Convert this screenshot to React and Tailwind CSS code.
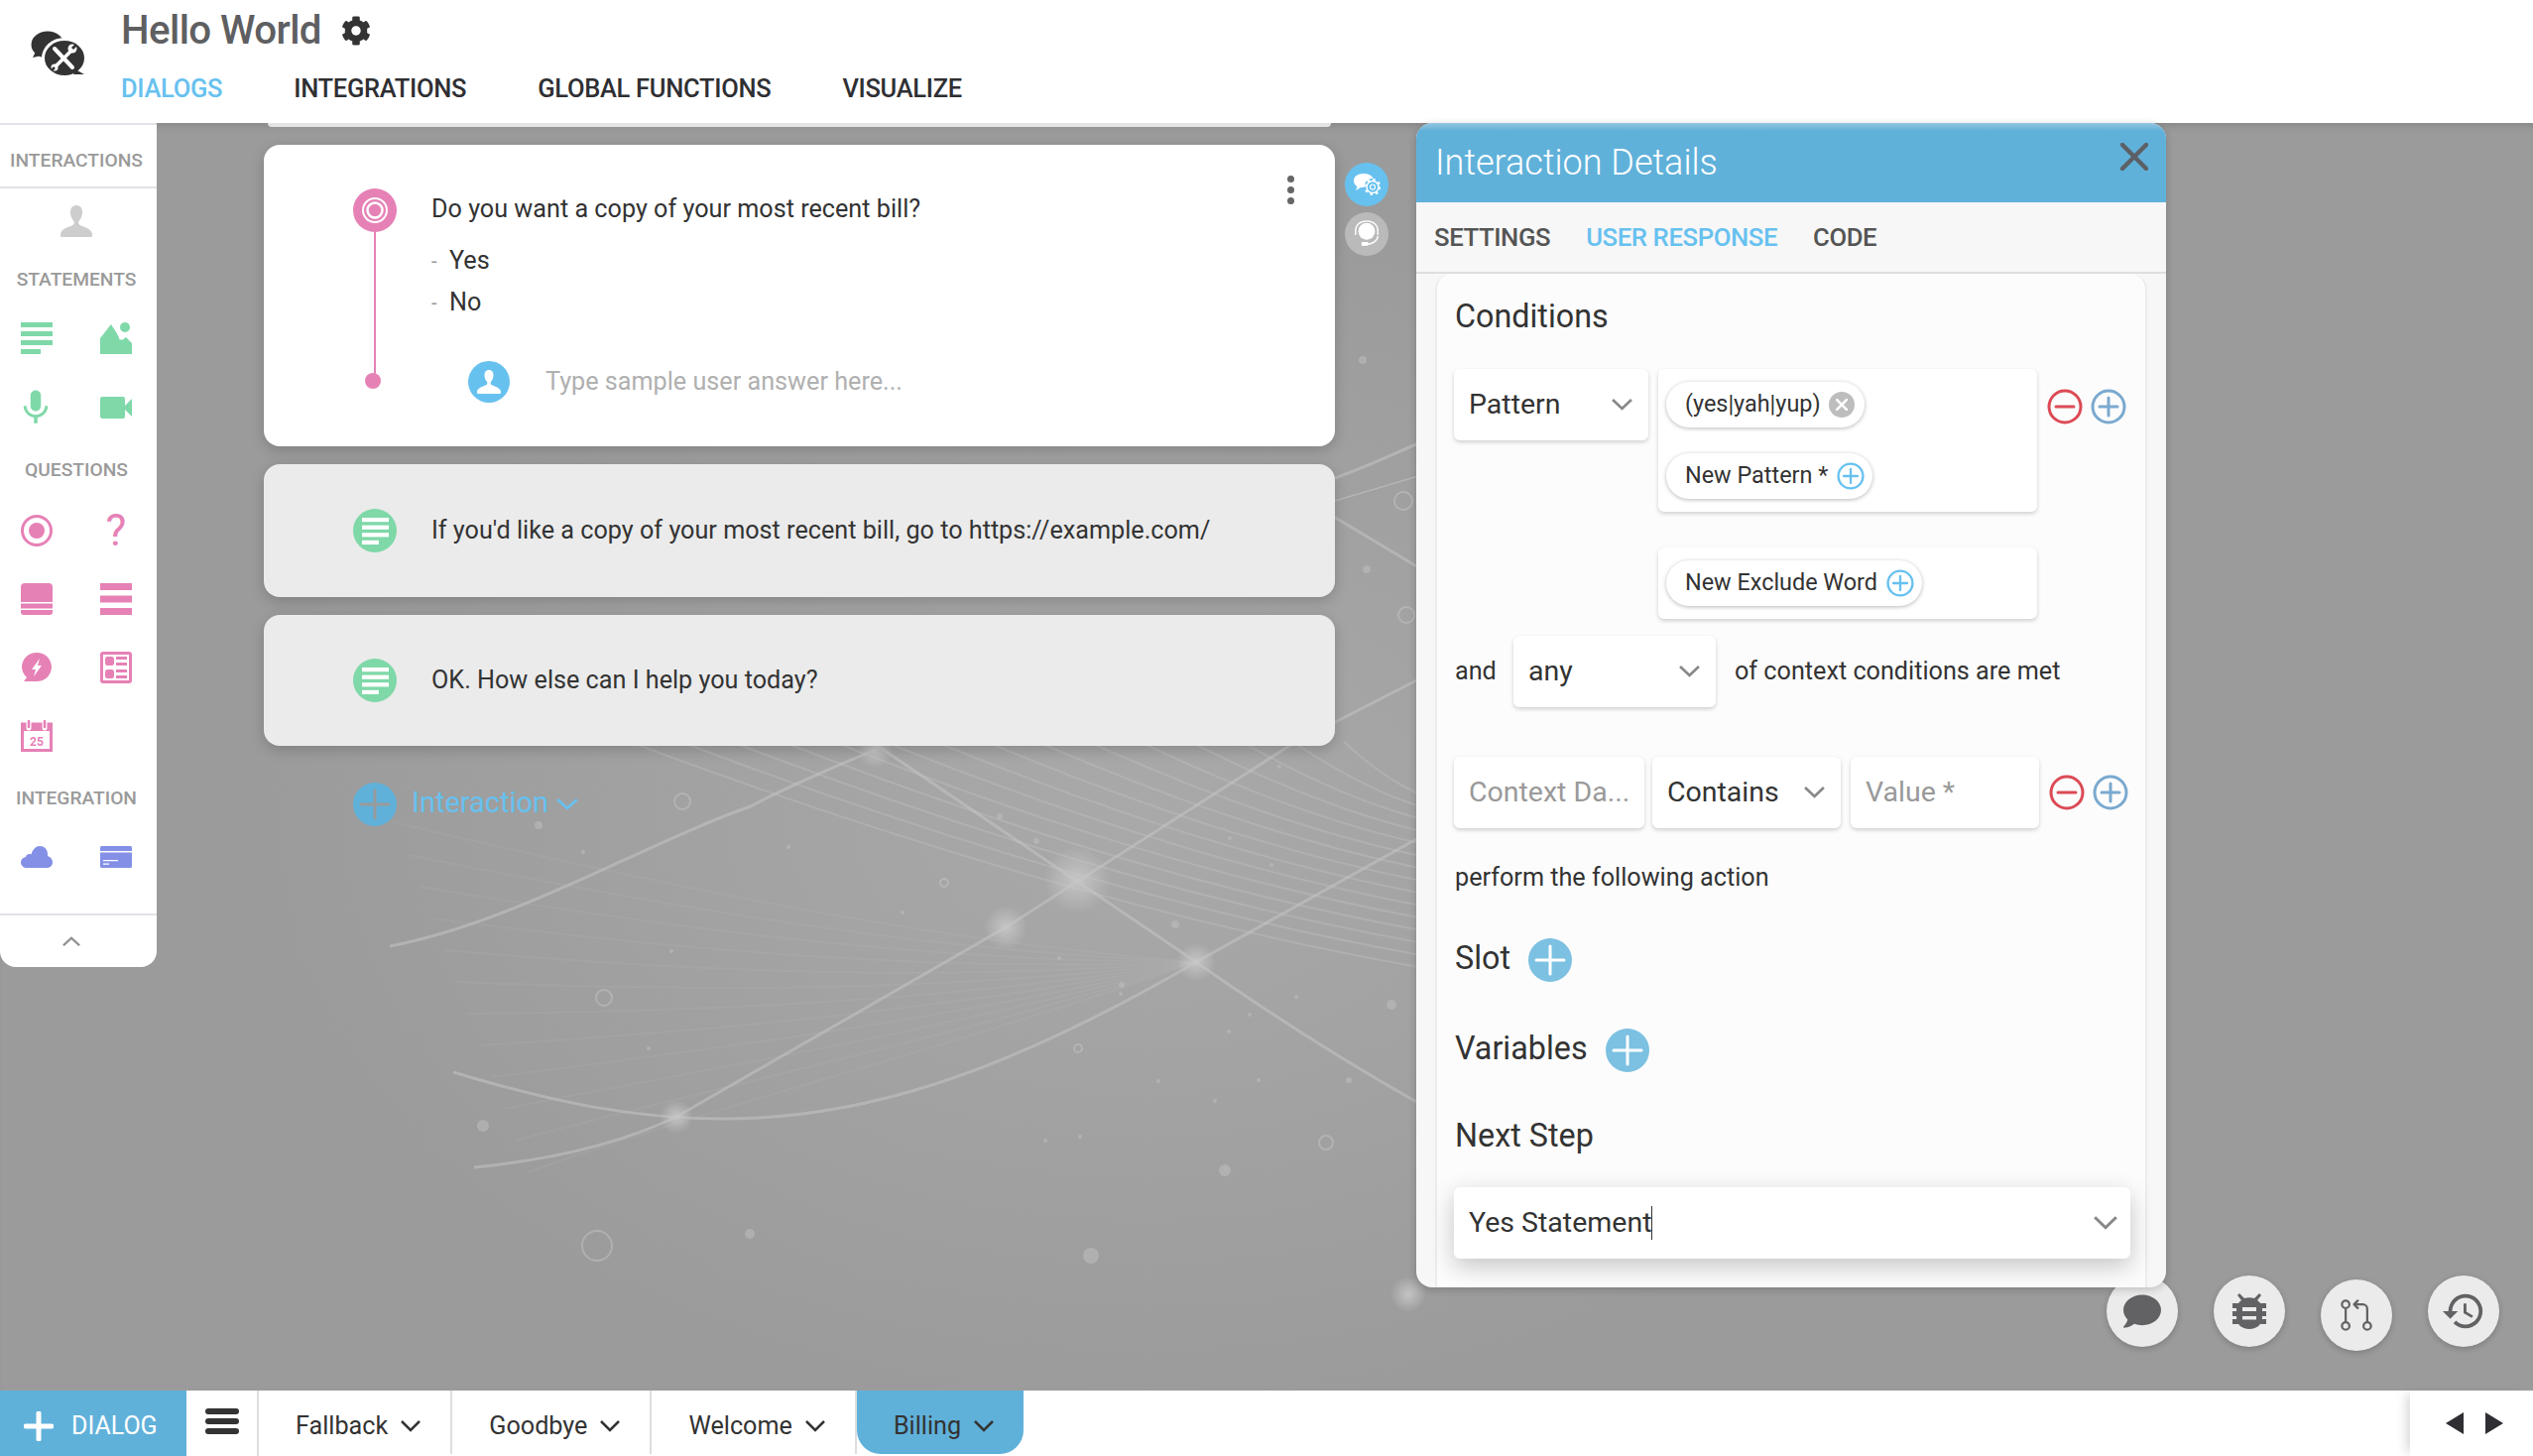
import { FaCog, FaComment } from 'react-icons/fa'
import { GoGitPullRequest } from 'react-icons/go'
import { MdHistory, MdMic } from 'react-icons/md'

const GREEN = '#7fd8a8'
const PINK = '#e681b6'
const PURPLE = '#8490e6'

function Chevron({ className = 'w-[21px] h-[12px]', color = '#888', width = 2.5, up = false }) {
  return (
    <svg viewBox="0 0 20 12" preserveAspectRatio="none" className={className} fill="none" stroke={color} strokeWidth={width}>
      <path d={up ? 'M1 11l9-9 9 9' : 'M1 1l9 9 9-9'} />
    </svg>
  )
}

function LinesIcon({ color = GREEN, className = 'w-8 h-8' }) {
  return (
    <svg viewBox="0 0 32 32" className={className} fill={color}>
      <rect x="0" y="0" width="32" height="5" />
      <rect x="0" y="9" width="32" height="5" />
      <rect x="0" y="18" width="32" height="5" />
      <rect x="0" y="27" width="20" height="5" />
    </svg>
  )
}

function PersonIcon({ color, className }) {
  return (
    <svg viewBox="0 0 32 32" className={className} fill={color}>
      <path d="M16 0c-4 0-6 3-6 7 0 4 1.500 7 3.500 9 .5 1 .5 2.500-.5 3.500C9 22 1 23 0 29c0 1 0 3 1 3h30c1 0 1-2 1-3-1-6-9-7-13-9.500-1-1-1-2.500-.5-3.500 2-2 3.500-5 3.500-9 0-4-2-7-6-7z" />
    </svg>
  )
}

function TargetIcon() {
  return (
    <svg viewBox="0 0 44 44" className="w-[44px] h-[44px]">
      <circle cx="22" cy="22" r="22" fill={PINK} />
      <circle cx="22" cy="22" r="12" fill="none" stroke="#fff" strokeWidth="2" />
      <circle cx="22" cy="22" r="7.500" fill="none" stroke="#fff" strokeWidth="2.500" />
    </svg>
  )
}

function RoundAdd({ color = '#7cc0e2', line = '#fff', className = 'w-[44px] h-[44px]' }) {
  return (
    <svg viewBox="0 0 44 44" className={className}>
      <circle cx="22" cy="22" r="22" fill={color} />
      <path d="M22 8v28M8 22h28" stroke={line} strokeWidth="3" strokeLinecap="round" />
    </svg>
  )
}

function OutlineAction({ type = 'add', color, className = 'w-[36px] h-[36px]' }) {
  return (
    <svg viewBox="0 0 36 36" className={className} fill="none" stroke={color} strokeWidth="3">
      <circle cx="18" cy="18" r="16" />
      <path d={type === 'add' ? 'M18 9v18M9 18h18' : 'M9 18h18'} strokeLinecap="round" />
    </svg>
  )
}

function Logo() {
  return (
    <svg viewBox="0 0 56 50" className="w-[56px] h-[50px]">
      <ellipse cx="18" cy="17" rx="16.500" ry="13.500" fill="#333" />
      <path d="M6 24L3 30l9-2z" fill="#333" />
      <ellipse cx="35" cy="30.500" rx="23" ry="20.500" fill="#fff" />
      <ellipse cx="35" cy="30.500" rx="20" ry="17.500" fill="#333" />
      <path d="M46 42l9 5-11 0z" fill="#333" />
      <path d="M25 21l18 19" stroke="#fff" strokeWidth="4" strokeLinecap="round" />
      <path d="M42 23L26 39" stroke="#fff" strokeWidth="3.500" strokeLinecap="round" />
      <circle cx="43" cy="21" r="4.500" fill="#fff" />
      <path d="M43 21l4-4" stroke="#333" strokeWidth="3" />
      <circle cx="25" cy="40" r="3.500" fill="#fff" />
      <path d="M25 40l-3 3" stroke="#333" strokeWidth="2.500" />
    </svg>
  )
}

function Backdrop() {
  const bundle = Array.from({ length: 15 }, (_, i) => i / 14)
  const fan = Array.from({ length: 12 }, (_, i) => i)
  const dots = [
    [543, 832, 4], [588, 859, 2], [795, 854, 2], [677, 959, 2], [910, 920, 2], [1068, 966, 2],
    [1008, 823, 3], [1130, 1002, 2], [654, 1057, 2], [487, 1135, 6], [756, 1244, 5], [1100, 1266, 8],
    [1235, 1180, 6], [1168, 1090, 2], [1054, 1150, 2], [1089, 1146, 2], [1239, 1040, 2], [1131, 993, 3],
    [1360, 1089, 3], [1307, 1005, 2], [1403, 1013, 5], [1269, 1089, 2], [1225, 1110, 2], [1260, 1023, 2],
    [1185, 932, 4], [1045, 848, 3], [1240, 845, 2], [1282, 872, 2], [1290, 773, 2], [1374, 363, 4],
    [1378, 574, 4],
  ]
  const rings = [
    [688, 808, 8], [609, 1006, 8], [602, 1256, 15], [952, 890, 4], [1087, 1057, 4], [1337, 1152, 7],
    [1415, 505, 9], [1418, 620, 8],
  ]
  const nodes = [
    [1086, 887, 26], [1014, 935, 17], [1206, 970, 15], [682, 1126, 13], [882, 756, 14], [1420, 1305, 14],
  ]
  return (
    <svg viewBox="0 124 2554 1278" className="absolute inset-0 w-full h-full pointer-events-none">
      <defs>
        <radialGradient id="glow">
          <stop offset="0%" stopColor="#c8c8c8" stopOpacity="0.9" />
          <stop offset="100%" stopColor="#c8c8c8" stopOpacity="0" />
        </radialGradient>
      </defs>
      <g fill="none" stroke="#c8c8c8" strokeOpacity="0.12">
        {fan.map((i) => (
          <path key={i} d={`M${400 + i * 12} ${830 + i * 32} C 700 ${900 + i * 20}, 950 ${950 + i * 10}, 1206 970`} strokeWidth="2" />
        ))}
      </g>
      <g fill="none" stroke="#c8c8c8" strokeOpacity="0.32" strokeWidth="2">
        {bundle.map((t) => {
          const x = 635 + 720 * t
          const endY = 975 - 175 * t
          return <path key={t} d={`M${x} 748 Q ${x + (1430 - x) * 0.55} ${748 + (endY - 748) * 0.72} 1430 ${endY}`} />
        })}
      </g>
      <g fill="none" stroke="#c4c4c4" strokeOpacity="0.55" strokeWidth="3">
        <path d="M457 1081C560 1112 640 1128 730 1128 860 1128 1000 1090 1206 970L1430 845" />
        <path d="M478 1177Q600 1165 682 1126 850 1030 1014 935L1300 752 1430 685" />
        <path d="M393 954C520 930 650 850 757 813 800 790 850 770 882 756" />
        <path d="M882 750L1206 970Q1320 1050 1430 1112" />
        <path d="M1340 518L1430 572" />
        <path d="M1346 482C1380 470 1400 460 1430 447" />
        <path d="M1346 505L1430 480" strokeWidth="1.500" />
      </g>
      <g fill="#c6c6c6" fillOpacity="0.45">
        {dots.map(([x, y, r]) => (
          <circle key={`${x}-${y}`} cx={x} cy={y} r={r} />
        ))}
      </g>
      <g fill="none" stroke="#c6c6c6" strokeOpacity="0.5" strokeWidth="2">
        {rings.map(([x, y, r]) => (
          <circle key={`${x}-${y}`} cx={x} cy={y} r={r} />
        ))}
      </g>
      {nodes.map(([x, y, r]) => (
        <circle key={x} cx={x} cy={y} r={r * 1.300} fill="url(#glow)" />
      ))}
    </svg>
  )
}

function SideLabel({ children, className = '' }) {
  return <div className={`pr-[4px] text-center text-[19.200px] leading-5 font-medium text-[#9a9a9a] ${className}`}>{children}</div>
}

function Sidebar() {
  return (
    <aside className="relative z-10 w-[158px] h-[851px] shrink-0 bg-white rounded-br-[16px] rounded-bl-[16px] flex flex-col border-t-2 border-[#e2e2e8]">
      <div className="h-[64px] shrink-0 border-b-2 border-[#e2e2e8] flex items-center justify-center pt-[10px]">
        <SideLabel className="pr-0">INTERACTIONS</SideLabel>
      </div>
      <div className="flex justify-center mt-[17px] pr-[4px]">
        <PersonIcon color="#cdcdcd" className="w-8 h-8" />
      </div>
      <SideLabel className="mt-[33px]">STATEMENTS</SideLabel>
      <div className="grid grid-cols-2 px-[21px] gap-x-[48px] mt-[33px] w-[154px]">
        <LinesIcon />
        <svg viewBox="0 0 32 32" className="w-8 h-8" fill={GREEN}>
          <path d="M0 32V16l11-14 7 11 4 5 4-3 6 6v11z" />
          <circle cx="25" cy="5" r="5" />
          <path d="M17 11l3 7 2-2-3-7z" fill="#fff" />
        </svg>
        <div className="h-8 w-8 mt-[38px] flex items-center justify-center">
          <MdMic className="w-[42px] h-[42px] shrink-0 -ml-[2px]" color={GREEN} />
        </div>
        <div className="h-8 w-8 mt-[38px] flex items-center justify-center">
          <svg viewBox="0 0 32 22" className="w-8 h-[22px]" fill={GREEN}>
            <rect width="25" height="22" rx="2" />
            <path d="M25 9L32 2v18l-7-7z" />
          </svg>
        </div>
      </div>
      <SideLabel className="mt-[37px]">QUESTIONS</SideLabel>
      <div className="grid grid-cols-2 px-[21px] gap-x-[48px] mt-[35px] w-[154px] gap-y-[37px]">
        <svg viewBox="0 0 32 32" className="w-8 h-8">
          <circle cx="16" cy="16" r="14.500" fill="none" stroke={PINK} strokeWidth="3" />
          <circle cx="16" cy="16" r="8" fill={PINK} />
        </svg>
        <div className="h-8 w-8 flex items-center justify-center text-[44px] leading-8 text-[#e681b6]">?</div>
        <svg viewBox="0 0 32 32" className="w-8 h-8" fill={PINK}>
          <path d="M0 4a4 4 0 014-4h24a4 4 0 014 4v15H0z" />
          <rect y="20.500" width="32" height="5" />
          <path d="M0 27h32v2a3 3 0 01-3 3H3a3 3 0 01-3-3z" />
        </svg>
        <svg viewBox="0 0 32 32" className="w-8 h-8" fill={PINK}>
          <rect width="32" height="7" />
          <rect y="12.500" width="32" height="7" />
          <rect y="25" width="32" height="7" />
        </svg>
        <svg viewBox="0 0 32 32" className="w-8 h-8" fill={PINK}>
          <path d="M16 1c8 0 15 6 15 14.500S24 30 16 30H3l3-4C3 23 1 19.500 1 15.500 1 7 8 1 16 1z" />
          <path d="M19 7l-8 11h4l-2 7 8-11h-4z" fill="#fff" />
        </svg>
        <svg viewBox="0 0 32 32" className="w-8 h-8">
          <rect x="1.500" y="1.500" width="29" height="29" rx="1.500" fill="none" stroke={PINK} strokeWidth="3" />
          <rect x="5" y="5" width="9" height="9" rx="2.500" fill={PINK} />
          <rect x="5" y="18" width="9" height="9" rx="2.500" fill={PINK} />
          <path d="M16 5h11v3H16zM16 11h11v3H16zM16 18h11v3H16zM16 24h11v3H16z" fill={PINK} />
        </svg>
        <svg viewBox="0 0 32 32" className="w-8 h-8">
          <rect x="1.500" y="4" width="29" height="26.500" fill="none" stroke={PINK} strokeWidth="3" />
          <rect x="0" y="3" width="32" height="8" fill={PINK} />
          <path d="M8 0v8M24 0v8" stroke="#fff" strokeWidth="5" strokeLinecap="round" />
          <path d="M8 1v6M24 1v6" stroke={PINK} strokeWidth="2.500" strokeLinecap="round" />
          <text x="16" y="26" textAnchor="middle" fontSize="12" fontWeight="700" fill={PINK} fontFamily="Roboto, sans-serif">25</text>
        </svg>
      </div>
      <SideLabel className="mt-[37px]">INTEGRATION</SideLabel>
      <div className="grid grid-cols-2 px-[21px] gap-x-[48px] mt-[38px] w-[154px]">
        <svg viewBox="0 0 32 22" className="w-8 h-[22px]" fill={PURPLE}>
          <path d="M6 22c-3 0-6-2-6-5.500 0-3 2-5 5-5.500 0-2 2-3 4-3 .5 0 1 0 1.500.5C12 3 15.500 0 19 0c4.500 0 8 3.500 8 8 0 .5 0 1 0 2 3 1 5 3.500 5 6.500 0 3-2.500 5.500-5.500 5.500z" />
        </svg>
        <svg viewBox="0 0 32 22" className="w-8 h-[22px]">
          <rect width="32" height="22" rx="1.500" fill={PURPLE} />
          <rect y="5" width="32" height="1.500" fill="#fff" />
          <path d="M3 14h15v1.200H3zM3 17.500h6v1.200H3z" fill="#fff" />
        </svg>
      </div>
      <div className="mt-auto h-[54px] border-t-2 border-[#e2e2e8] flex items-center justify-center pr-[14px]">
        <Chevron up className="w-[18px] h-[10px]" color="#8f8f8f" />
      </div>
    </aside>
  )
}

function QuestionCard() {
  return (
    <div className="relative h-[304px] rounded-[16px] bg-white shadow-[0_4px_14px_rgba(0,0,0,0.18)] pl-[90px] pt-[44px]">
      <div className="flex">
        <div className="flex flex-col items-center w-[44px]">
          <TargetIcon />
          <div className="w-[2px] h-[144px] bg-[#e681b6]" />
          <div className="w-4 h-4 -mt-[2px] -ml-[4px] rounded-full bg-[#e681b6]" />
        </div>
        <div className="ml-[35px] -mt-[1px] text-[25.200px] text-[#333]">
          <div className="leading-[44px]">Do you want a copy of your most recent bill?</div>
          <div className="mt-[9px] flex items-center h-[42px] leading-[42px]">
            <span className="text-[#999] text-[20px] w-[18px]">-</span>Yes
          </div>
          <div className="flex items-center h-[42px] leading-[42px]">
            <span className="text-[#999] text-[20px] w-[18px]">-</span>No
          </div>
          <div className="mt-[37px] -ml-[1px] flex items-center h-[44px] pl-[38px]">
            <div className="w-[42px] h-[42px] rounded-full bg-[#67c1ef] flex items-center justify-center">
              <PersonIcon color="#fff" className="w-[24px] h-[24px]" />
            </div>
            <span className="ml-[36px] text-[#b0b0b0]">Type sample user answer here...</span>
          </div>
        </div>
      </div>
      <div className="absolute top-[31px] right-[41px] flex flex-col gap-[4px]">
        <div className="w-[7px] h-[7px] rounded-full bg-[#666]" />
        <div className="w-[7px] h-[7px] rounded-full bg-[#666]" />
        <div className="w-[7px] h-[7px] rounded-full bg-[#666]" />
      </div>
    </div>
  )
}

function StatementCard({ text, className }) {
  return (
    <div className={`mt-[18px] rounded-[16px] bg-[#ebebeb] shadow-[0_4px_14px_rgba(0,0,0,0.18)] pl-[90px] flex items-center ${className}`}>
      <div className="w-[44px] h-[44px] rounded-full bg-[#7fd8a8] flex items-center justify-center">
        <LinesIcon color="#fff" className="w-[27px] h-[27px]" />
      </div>
      <span className="ml-[35px] text-[25.200px] text-[#333]">{text}</span>
    </div>
  )
}

function Field({ children, className = '' }) {
  return (
    <div className={`bg-white rounded-[6px] shadow-[0_2px_4px_rgba(0,0,0,0.18)] ${className}`}>{children}</div>
  )
}

function SelectField({ label, className }) {
  return (
    <Field className={`flex items-center justify-between pl-[15px] pr-[16px] ${className}`}>
      <span className="text-[28.500px] text-[#333]">{label}</span>
      <Chevron />
    </Field>
  )
}

function Chip({ label, children, className = '' }) {
  return (
    <div className={`h-[46px] rounded-full bg-white shadow-[0_1px_4px_rgba(0,0,0,0.28)] flex items-center pl-[19px] pr-[5px] text-[23.400px] text-[#333] ${className}`}>
      <span>{label}</span>
      {children}
    </div>
  )
}

function CloseIcon({ color, className, width = 4.500 }) {
  return (
    <svg viewBox="0 0 28 28" className={className} fill="none" stroke={color} strokeWidth={width} strokeLinecap="round">
      <path d="M2 2l24 24M26 2L2 26" />
    </svg>
  )
}

function DetailsPanel() {
  return (
    <section className="relative z-10 w-[756px] h-[1174px] shrink-0 rounded-[16px] overflow-hidden bg-[#f7f7f7] flex flex-col shadow-[0_2px_8px_rgba(0,0,0,0.2)]">
      <div className="h-[80px] shrink-0 bg-linear-to-b from-[#94c5df] to-[#60b1da] to-[10%] flex items-center justify-between pl-[19px] pr-[18px]">
        <span className="text-[36px] font-light text-white">Interaction Details</span>
        <CloseIcon color="#5c6066" className="w-[28px] h-[28px] mb-[12px]" />
      </div>
      <div className="h-[72px] shrink-0 border-b-2 border-[#dedede] flex items-center gap-[36px] pl-[18px] text-[25.700px] font-medium tracking-[-0.4px] text-[#555]">
        <span>SETTINGS</span>
        <span className="text-[#67c1ef]">USER RESPONSE</span>
        <span>CODE</span>
      </div>
      <div className="flex-1 ml-[19px] w-[718px] border-l-2 border-r-2 border-[#ececec] rounded-t-[16px] bg-[#fcfcfc] pl-[18px] pr-[16px]">
        <h2 className="mt-[24px] text-[32.300px] leading-[38px] text-[#333]">Conditions</h2>
        <div className="mt-[34px] -ml-[1px] flex items-start">
          <SelectField label="Pattern" className="w-[196px] h-[72px]" />
          <div className="ml-[10px]">
            <Field className="w-[382px] h-[144px] pl-[8px] pt-[13px] flex flex-col items-start gap-[26px]">
              <Chip label="(yes|yah|yup)" className="w-[200px]">
                <div className="ml-auto mr-[5px] w-[26px] h-[26px] rounded-full bg-[#bdbdbd] flex items-center justify-center">
                  <CloseIcon color="#fff" className="w-[12px] h-[12px]" width={6} />
                </div>
              </Chip>
              <Chip label="New Pattern *" className="w-[208px]">
                <OutlineAction color="#67c1ef" className="ml-auto mr-[3px] w-[28px] h-[28px]" />
              </Chip>
            </Field>
            <Field className="mt-[36px] w-[382px] h-[72px] pl-[8px] pt-[13px]">
              <Chip label="New Exclude Word" className="w-[258px]">
                <OutlineAction color="#67c1ef" className="ml-auto mr-[3px] w-[28px] h-[28px]" />
              </Chip>
            </Field>
          </div>
          <div className="ml-[10px] mt-[20px] flex gap-[8px]">
            <OutlineAction type="remove" color="#dc4a55" />
            <OutlineAction color="#7aa9cf" />
          </div>
        </div>
        <div className="mt-[17px] flex items-center text-[25.200px] text-[#333]">
          <span className="w-[59px]">and</span>
          <SelectField label="any" className="w-[204px] h-[72px]" />
          <span className="ml-[19px]">of context conditions are met</span>
        </div>
        <div className="mt-[50px] -ml-[1px] flex items-center">
          <Field className="w-[192px] h-[72px] flex items-center pl-[15px] text-[28.500px] text-[#999]">Context Da...</Field>
          <SelectField label="Contains" className="ml-[8px] w-[190px] h-[72px]" />
          <Field className="ml-[10px] w-[190px] h-[72px] flex items-center pl-[15px] text-[28.500px] text-[#999]">Value *</Field>
          <div className="ml-[10px] flex gap-[8px]">
            <OutlineAction type="remove" color="#dc4a55" />
            <OutlineAction color="#7aa9cf" />
          </div>
        </div>
        <div className="mt-[33px] text-[25.200px] leading-[34px] text-[#333]">perform the following action</div>
        <div className="mt-[40px] flex items-center text-[32.300px] text-[#333]">
          <span>Slot</span>
          <RoundAdd className="ml-[18px] w-[44px] h-[44px] mt-[3px]" />
        </div>
        <div className="mt-[43px] flex items-center text-[32.300px] text-[#333]">
          <span>Variables</span>
          <RoundAdd className="ml-[18px] w-[44px] h-[44px] mt-[3px]" />
        </div>
        <div className="mt-[43px] text-[32.300px] leading-[40px] text-[#333]">Next Step</div>
        <Field className="mt-[32px] w-[682px] -ml-[1px] h-[72px] flex items-center justify-between pl-[15px] pr-[13px] shadow-[0_8px_24px_rgba(0,0,0,0.22)]">
          <span className="flex items-center text-[28.500px] text-[#333]">
            Yes Statement<span className="w-[1px] h-[34px] bg-[#333]" />
          </span>
          <Chevron className="w-[24px] h-[14px]" />
        </Field>
      </div>
    </section>
  )
}

function Fab({ icon, className }) {
  return (
    <div className={`absolute w-[72px] h-[72px] rounded-full bg-[#ebebeb] shadow-[0_2px_6px_rgba(0,0,0,0.2)] flex items-center justify-center text-[#626265] ${className}`}>
      {icon}
    </div>
  )
}

function BugIcon() {
  return (
    <svg viewBox="0 0 34 36" className="w-[34px] h-[36px]" fill="#626265">
      <path d="M7 0l5 5c3-1 7-1 10 0l5-5 2 2-4 5c3 2 5 5 5 8v9c0 7-5 12-13 12S4 31 4 24v-9c0-3 2-6 5-8L5 2z" />
      <rect y="10" width="34" height="5" />
      <rect y="18" width="34" height="5" />
      <rect y="26" width="34" height="5" />
      <rect x="10" y="14" width="14" height="4" fill="#ebebeb" />
      <rect x="10" y="23" width="14" height="3.500" fill="#ebebeb" />
    </svg>
  )
}

function Tab({ label, active }) {
  return (
    <div className={`h-[64px] flex items-center gap-[13px] pt-[8px] pl-[37px] pr-[30px] text-[25.200px] text-[#333] ${active ? 'bg-[#60b1da] rounded-b-[24px]' : 'border-r-2 border-[#dedede]'}`}>
      <span>{label}</span>
      <Chevron className="w-[20px] h-[12px]" color="#333" />
    </div>
  )
}

function App() {
  return (
    <div className="w-[2554px] h-[1468px] overflow-hidden flex flex-col bg-white font-[Roboto,sans-serif]">
      <header className="h-[124px] shrink-0 flex bg-white">
        <div className="w-[122px] shrink-0 pl-[30px] pt-[28px]">
          <Logo />
        </div>
        <div>
          <div className="mt-[6px] flex items-center h-[50px]">
            <h1 className="text-[40.300px] font-medium tracking-[-0.6px] text-[#5f5f62]">Hello World</h1>
            <FaCog className="ml-[20px] w-[30px] h-[30px] text-[#333]" />
          </div>
          <nav className="mt-[17px] flex gap-[72px] text-[25.500px] leading-8 font-medium tracking-[-0.3px] text-[#2f2f33]">
            <span className="text-[#67c1ef]">DIALOGS</span>
            <span>INTEGRATIONS</span>
            <span>GLOBAL FUNCTIONS</span>
            <span>VISUALIZE</span>
          </nav>
        </div>
      </header>
      <main className="relative flex-1 flex items-start bg-[#9b9b9b] bg-[radial-gradient(ellipse_900px_600px_at_1150px_700px,#a9a9a9,#9b9b9b)] shadow-[inset_0_8px_10px_-6px_rgba(0,0,0,0.15)]">
        <Backdrop />
        <Sidebar />
        <div className="relative z-10 ml-[108px] w-[1080px] shrink-0">
          <div className="mx-[4px] h-[4px] rounded-b-[8px] bg-[#e4e4e4]" />
          <div className="mt-[18px]">
            <QuestionCard />
          </div>
          <StatementCard className="h-[134px]" text="If you'd like a copy of your most recent bill, go to https://example.com/" />
          <StatementCard className="h-[132px]" text="OK. How else can I help you today?" />
          <div className="mt-[37px] ml-[90px] flex items-center text-[29px] text-[#67c1ef]">
            <RoundAdd color="#60b1da" line="#9a9a9a" />
            <span className="ml-[15px] -mt-[3px]">Interaction</span>
            <Chevron className="ml-[8px] w-[22px] h-[12px]" color="#67c1ef" />
          </div>
        </div>
        <div className="relative z-10 ml-[10px] mt-[40px] w-[44px] shrink-0 flex flex-col gap-[6px]">
          <div className="w-[44px] h-[44px] rounded-full bg-[#67c1ef] flex items-center justify-center">
            <svg viewBox="0 0 27 22" className="w-[27px] h-[22px]">
              <path d="M0 7C0 3 4 0 10 0s10 3 10 7-4 7-10 7H7l-5 3 1.500-4C1 12 0 9.500 0 7z" fill="#fff" />
              <circle cx="19" cy="13.500" r="8.500" fill="#67c1ef" />
              <circle cx="19" cy="13.500" r="6" fill="none" stroke="#fff" strokeWidth="1.500" />
              <circle cx="19" cy="13.500" r="7.500" fill="none" stroke="#fff" strokeWidth="2" strokeDasharray="2.500 3.400" />
              <circle cx="19" cy="13.500" r="2.500" fill="none" stroke="#fff" strokeWidth="1.200" />
            </svg>
          </div>
          <div className="w-[44px] h-[44px] rounded-full bg-[#bababa] flex items-center justify-center">
            <svg viewBox="0 0 32 32" className="w-[30px] h-[30px]" fill="none" stroke="#fff">
              <circle cx="16" cy="13" r="9" fill="#fff" stroke="none" />
              <path d="M4 17V13C4 6 9 2 16 2s12 4 12 11v4" strokeWidth="1.500" />
              <path d="M28 18c0 5-6 9-12 9" strokeWidth="1.500" />
              <rect x="11" y="25" width="6" height="3" fill="#fff" />
            </svg>
          </div>
        </div>
        <div className="ml-[28px]">
          <DetailsPanel />
        </div>
        <Fab className="left-[2124px] top-[1162px]" icon={<FaComment className="w-[38px] h-[38px]" />} />
        <Fab className="left-[2232px] top-[1162px]" icon={<BugIcon />} />
        <Fab className="left-[2340px] top-[1166px]" icon={<GoGitPullRequest className="w-[36px] h-[36px]" />} />
        <Fab className="left-[2448px] top-[1162px]" icon={<MdHistory className="w-[46px] h-[46px]" />} />
      </main>
      <footer className="relative z-20 h-[66px] shrink-0 flex items-start bg-white">
        <div className="w-[188px] h-[66px] pt-[6px] bg-[#60b1da] flex items-center pl-[24px] text-[25px] text-white">
          <svg viewBox="0 0 30 30" className="w-[30px] h-[30px]">
            <path d="M15 2v26M2 15h26" stroke="#fff" strokeWidth="5" strokeLinecap="round" />
          </svg>
          <span className="ml-[18px]">DIALOG</span>
        </div>
        <div className="w-[73px] h-[66px] border-r-2 border-[#dedede] flex flex-col items-center gap-[4px] pt-[18px]">
          <div className="w-[34px] h-[6px] rounded-full bg-[#333]" />
          <div className="w-[34px] h-[6px] rounded-full bg-[#333]" />
          <div className="w-[34px] h-[6px] rounded-full bg-[#333]" />
        </div>
        <Tab label="Fallback" />
        <Tab label="Goodbye" />
        <Tab label="Welcome" />
        <Tab label="Billing" active />
        <div className="ml-auto w-[124px] h-[66px] pl-[6px] bg-white shadow-[-8px_0_10px_-4px_rgba(0,0,0,0.15)] flex items-center justify-center gap-[22px]">
          <svg viewBox="0 0 18 22" className="w-[18px] h-[22px]" fill="#2f2f33"><path d="M18 0v22L0 11z" /></svg>
          <svg viewBox="0 0 18 22" className="w-[18px] h-[22px]" fill="#2f2f33"><path d="M0 0v22l18-11z" /></svg>
        </div>
      </footer>
    </div>
  )
}

export default App
